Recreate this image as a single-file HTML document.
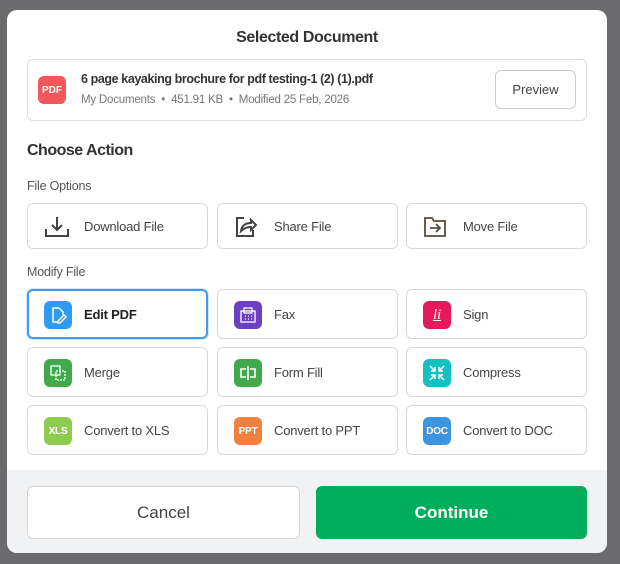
<!DOCTYPE html>
<html><head><style>
*{box-sizing:border-box;margin:0;padding:0}
body{width:620px;height:564px;background:#6b6b6e;font-family:"Liberation Sans",sans-serif;position:relative;overflow:hidden;color:#333}
.m{position:absolute;left:7px;top:10px;width:600px;height:543px;background:#fff;border-radius:10px;overflow:hidden}
.a{position:absolute}
.t{left:0;width:600px;top:19px;text-align:center;font-size:16px;font-weight:bold;color:#333;letter-spacing:-0.4px}
.doc{left:20px;top:49px;width:560px;height:62px;border:1px solid #ddd;border-radius:6px}
.ic{position:absolute;width:28px;height:28px;border-radius:6px;color:#fff;font-size:10px;font-weight:bold;display:flex;align-items:center;justify-content:center}
.card{position:absolute;width:181px;height:46px;border:1px solid #d9d9d9;border-radius:6px;font-size:13px;color:#444;letter-spacing:-0.2px}
.card .ic{left:16px;top:10px}
.card span.l{position:absolute;left:56px;top:15px}
.r .ic{top:11px}
.r span.l{top:17px}
.r{height:50px}
.sec{font-size:12.5px;color:#555;left:20px;letter-spacing:-0.2px}
.btn{position:absolute;top:476px;height:53px;border-radius:6px;display:flex;align-items:center;justify-content:center;font-size:17px}
</style></head><body>
<div class="m">
<div class="a t">Selected Document</div>
<div class="a doc">
 <div class="ic" style="left:10px;top:16px;background:#f0585a;font-size:10px">PDF</div>
 <div class="a" style="left:53px;top:12px;font-size:12.5px;font-weight:bold;color:#333;letter-spacing:-0.4px">6 page kayaking brochure for pdf testing-1 (2) (1).pdf</div>
 <div class="a" style="left:53px;top:34px;font-size:11.5px;color:#777;letter-spacing:-0.2px">My Documents &nbsp;•&nbsp; 451.91 KB &nbsp;•&nbsp; Modified 25 Feb, 2026</div>
 <div class="a" style="left:467px;top:10px;width:81px;height:39px;border:1px solid #ccc;border-radius:6px;font-size:13px;color:#444;display:flex;align-items:center;justify-content:center">Preview</div>
</div>
<div class="a" style="left:20px;top:132px;font-size:16px;font-weight:bold;color:#333;letter-spacing:-0.5px">Choose Action</div>
<div class="a sec" style="top:169px">File Options</div>
<div class="card" style="left:20px;top:193px"><svg class="a" style="left:16px;top:12px" width="26" height="22" viewBox="0 0 26 22" fill="none" stroke="#444" stroke-width="2"><path d="M13 1v13M8 9l5 5 5-5M2 13v7h22v-7"/></svg><span class="l">Download File</span></div>
<div class="card" style="left:210px;top:193px"><svg class="a" style="left:16px;top:11px" width="24" height="24" viewBox="0 0 24 24" fill="none" stroke="#444" stroke-width="2"><path d="M10 3H3v18h16v-6"/><path d="M7 16c1-6 5-8 10-8V5l5 5-5 5v-3c-4 0-7 1-10 4z"/></svg><span class="l">Share File</span></div>
<div class="card" style="left:399px;top:193px"><svg class="a" style="left:16px;top:12px" width="24" height="22" viewBox="0 0 24 22" fill="none" stroke="#5a4a3a" stroke-width="1.8"><path d="M2 2h7l2 3h11v15H2z"/><path d="M7 12h10M13 8l4 4-4 4"/></svg><span class="l">Move File</span></div>
<div class="a sec" style="top:255px">Modify File</div>
<div class="card r" style="left:20px;top:279px;border:2px solid #3b9cf0;box-shadow:0 0 0 1px #cfe6fb"><div class="ic" style="background:#2d9bf0;left:15px;top:10px"><svg width="18" height="18" viewBox="0 0 18 18" fill="none" stroke="#fff" stroke-width="1.5"><path d="M10 2H4v14h5M10 2l4 4v3"/><path d="M9 15l6-6 2 2-6 6H9z"/></svg></div><span class="l" style="left:55px;top:16px;font-weight:bold;color:#222">Edit PDF</span></div>
<div class="card r" style="left:210px;top:279px"><div class="ic" style="background:#6a3fc0"><svg width="16" height="16" viewBox="0 0 16 16" fill="none" stroke="#fff" stroke-width="1.3"><rect x="1" y="4" width="14" height="11"/><rect x="4" y="1" width="8" height="5"/><path d="M5 9h1M8 9h1M11 9h1M5 12h1M8 12h1M11 12h1"/></svg></div><span class="l">Fax</span></div>
<div class="card r" style="left:399px;top:279px"><div class="ic" style="background:#e8185c;font-style:italic;font-family:'Liberation Serif',serif;font-size:15px;font-weight:normal;text-decoration:underline">li</div><span class="l">Sign</span></div>
<div class="card r" style="left:20px;top:337px"><div class="ic" style="background:#3fa94c"><svg width="16" height="16" viewBox="0 0 16 16" fill="none" stroke="#fff" stroke-width="1.3"><rect x="1" y="1" width="9" height="9"/><rect x="6" y="6" width="9" height="9" stroke-dasharray="2 1"/></svg></div><span class="l">Merge</span></div>
<div class="card r" style="left:210px;top:337px"><div class="ic" style="background:#3fa94c"><svg width="18" height="18" viewBox="0 0 18 18" fill="none" stroke="#fff" stroke-width="1.6"><path d="M7 5H2v8h5M11 5h5v8h-5M9 2v14"/></svg></div><span class="l">Form Fill</span></div>
<div class="card r" style="left:399px;top:337px"><div class="ic" style="background:#15c0c0"><svg width="16" height="16" viewBox="0 0 16 16" fill="none" stroke="#fff" stroke-width="1.5"><path d="M1 1l5 5M6 2v4H2M15 1l-5 5M10 2v4h4M1 15l5-5M2 10h4v4M15 15l-5-5M14 10h-4v4"/></svg></div><span class="l">Compress</span></div>
<div class="card r" style="left:20px;top:395px"><div class="ic" style="background:#8ccd50">XLS</div><span class="l">Convert to XLS</span></div>
<div class="card r" style="left:210px;top:395px"><div class="ic" style="background:#ee8040">PPT</div><span class="l">Convert to PPT</span></div>
<div class="card r" style="left:399px;top:395px"><div class="ic" style="background:#3e95dd">DOC</div><span class="l">Convert to DOC</span></div>
<div class="a" style="left:0;top:460px;width:600px;height:83px;background:#f1f2f4"></div>
<div class="btn" style="left:20px;width:273px;background:#fff;border:1px solid #d5d5d5;color:#444">Cancel</div>
<div class="btn" style="left:309px;width:271px;background:#00ad5a;color:#fff;font-weight:bold">Continue</div>
</div>
</body></html>
